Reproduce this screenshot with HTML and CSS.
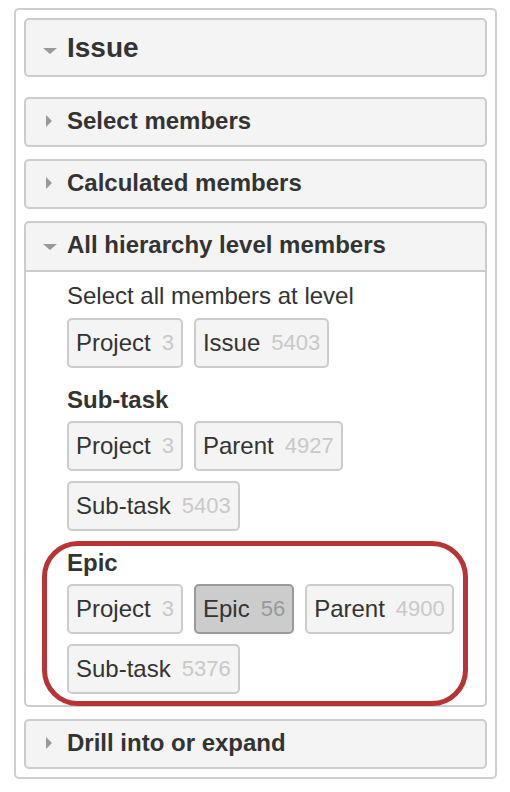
FILE: index.html
```html
<!DOCTYPE html>
<html>
<head>
<meta charset="utf-8">
<link rel="stylesheet" href="styles.css">
</head>
<body>
<div class="outer">
  <div class="panel panel-main">
    <div class="hdr hdr-lg"><span class="slot"><span class="caret down"></span></span><span>Issue</span></div>
  </div>
  <div class="panel">
    <div class="hdr"><span class="slot"><span class="caret right"></span></span><span>Select members</span></div>
  </div>
  <div class="panel">
    <div class="hdr"><span class="slot"><span class="caret right"></span></span><span>Calculated members</span></div>
  </div>
  <div class="panel open">
    <div class="hdr hdr-open"><span class="slot"><span class="caret down"></span></span><span>All hierarchy level members</span></div>
    <div class="pbody">
      <div class="section">
        <div class="stitle plain">Select all members at level</div>
        <div class="btns">
          <span class="btn">Project<span class="cnt">3</span></span>
          <span class="btn">Issue<span class="cnt">5403</span></span>
        </div>
      </div>
      <div class="section">
        <div class="stitle">Sub-task</div>
        <div class="btns">
          <span class="btn">Project<span class="cnt">3</span></span>
          <span class="btn">Parent<span class="cnt">4927</span></span>
          <span class="btn">Sub-task<span class="cnt">5403</span></span>
        </div>
      </div>
      <div class="section highlighted">
        <div class="stitle">Epic</div>
        <div class="btns">
          <span class="btn">Project<span class="cnt">3</span></span>
          <span class="btn sel">Epic<span class="cnt">56</span></span>
          <span class="btn">Parent<span class="cnt">4900</span></span>
          <span class="btn">Sub-task<span class="cnt">5376</span></span>
        </div>
        <div class="ring"></div>
      </div>
    </div>
  </div>
  <div class="panel">
    <div class="hdr"><span class="slot"><span class="caret right"></span></span><span>Drill into or expand</span></div>
  </div>
</div>
</body>
</html>
```

FILE: styles.css
```css
* { box-sizing: border-box; }

body {
  margin: 0;
  background: #fff;
  color: #333;
  font-family: "Liberation Sans", Arial, sans-serif;
}

.outer {
  margin: 8px 0 0 14px;
  width: 483px;
  border: 2px solid #cfcfcf;
  border-radius: 5px;
  padding: 8px;
  display: flex;
  flex-direction: column;
  gap: 12px;
}

.panel {
  border: 2px solid #cccccc;
  border-radius: 5px;
  background: #f4f4f4;
}

.panel-main { margin-bottom: 8px; }

.hdr {
  height: 46px;
  display: flex;
  align-items: center;
  padding: 0 0 3px 16px;
  font-size: 24px;
  font-weight: bold;
  color: #333;
}

.hdr-lg {
  height: 55px;
  font-size: 28px;
  padding-bottom: 0;
}

.hdr-open {
  height: 49px;
  border-bottom: 2px solid #cccccc;
}

.slot {
  width: 16px;
  margin-right: 9px;
  display: flex;
  justify-content: center;
  align-items: center;
}

.caret { display: block; width: 0; height: 0; }

.caret.right {
  border-left: 6px solid #999;
  border-top: 6px solid transparent;
  border-bottom: 6px solid transparent;
  margin-right: 3px;
}

.caret.down {
  border-top: 6px solid #999;
  border-left: 7px solid transparent;
  border-right: 7px solid transparent;
  margin-top: 4px;
}

.hdr-lg .caret.down { margin-top: 6px; }

.pbody {
  background: #fff;
  border-radius: 0 0 4px 4px;
  padding: 10px 0 11px 41px;
  display: flex;
  flex-direction: column;
  gap: 18px;
}

.section { position: relative; }

.stitle {
  font-size: 24px;
  line-height: 28px;
  font-weight: bold;
  margin-bottom: 7px;
}

.stitle.plain {
  font-weight: normal;
  margin-bottom: 8px;
}

.btns {
  display: flex;
  flex-wrap: wrap;
  gap: 10px 11px;
}

.btn {
  display: inline-flex;
  align-items: center;
  height: 50px;
  padding: 0 7px 1px;
  border: 2px solid #cccccc;
  border-radius: 5px;
  background: #f4f4f4;
  font-size: 24px;
  color: #333;
}

.cnt {
  font-size: 22px;
  color: #c9c9c9;
  margin-left: 11px;
}

.btn.sel {
  background: #cccccc;
  border-color: #9a9a9a;
}

.btn.sel .cnt { color: #999; }

.ring {
  position: absolute;
  left: -25px;
  top: -8px;
  width: 426px;
  height: 165px;
  border: 5px solid #b83434;
  border-radius: 36px;
  pointer-events: none;
}
```
